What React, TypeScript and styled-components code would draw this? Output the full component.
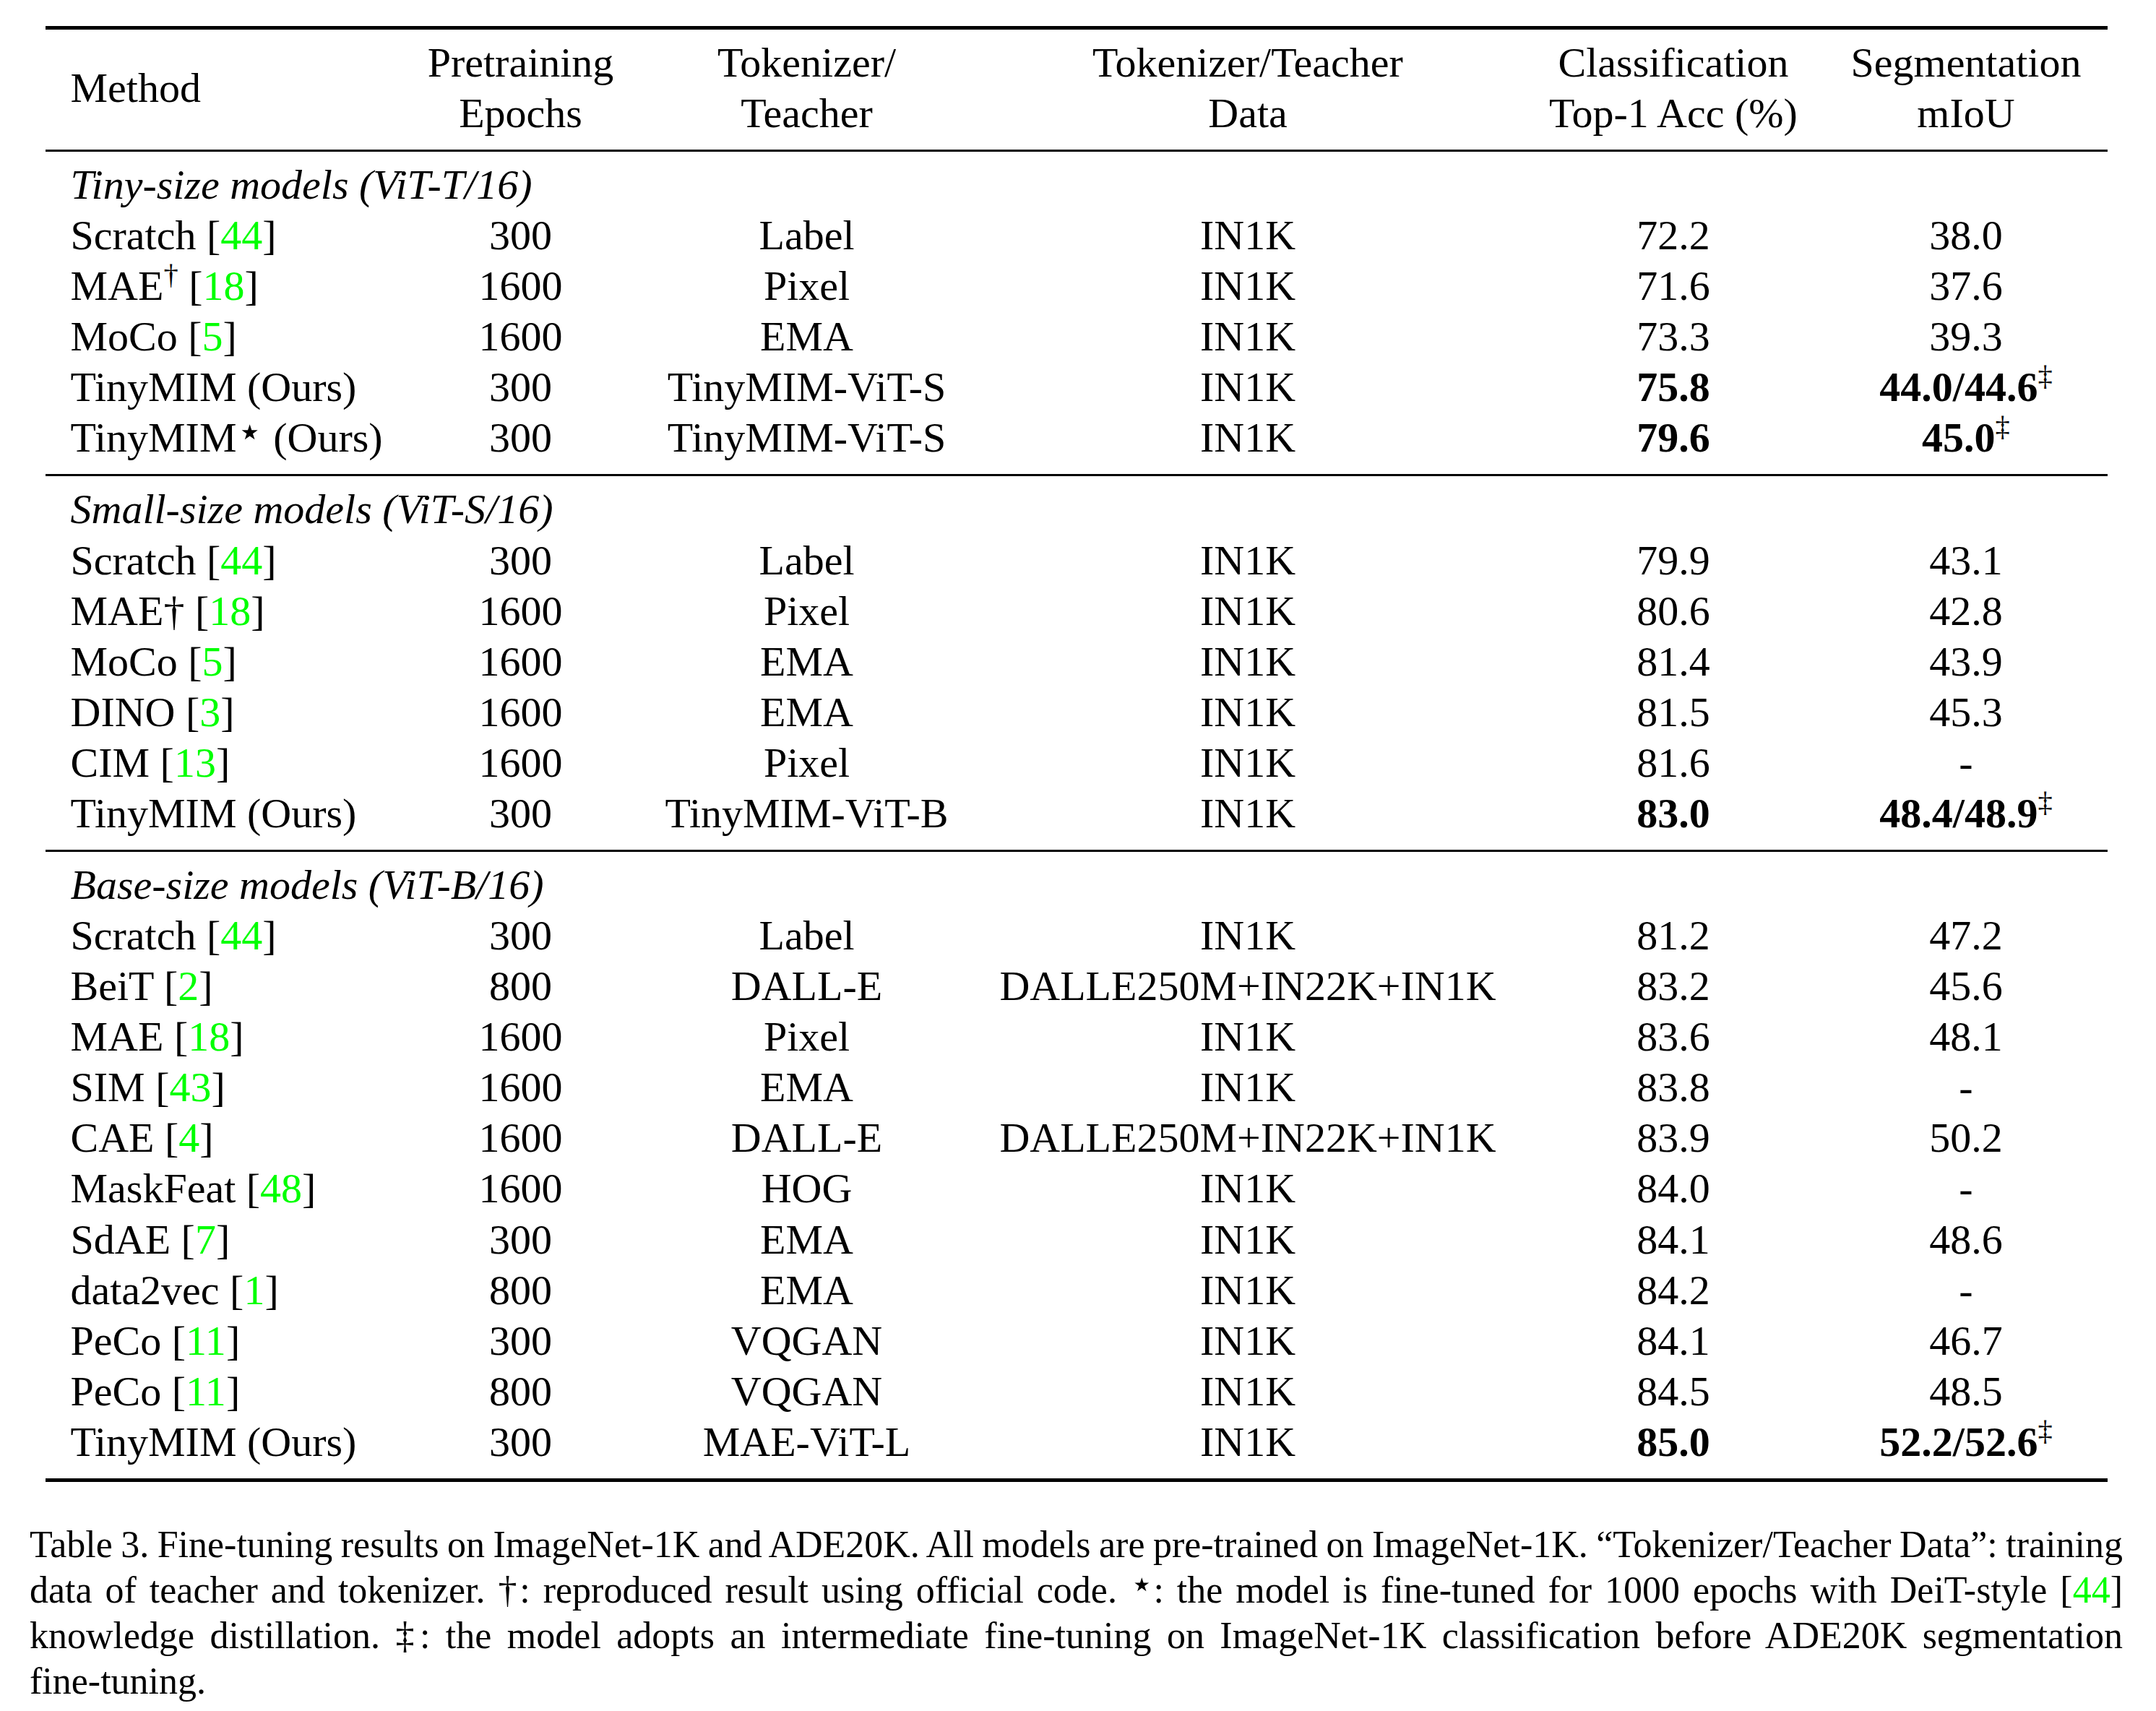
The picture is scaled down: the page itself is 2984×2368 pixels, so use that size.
import React from "react"
import styled, { createGlobalStyle } from "styled-components"

type Mark = "dagger" | "supDagger" | "supStar"

type Entry = {
  name: string
  mark?: Mark
  cite?: number
  epochs: number
  teacher: string
  data: string
  cls: string
  seg: string
  best?: boolean
  segNote?: boolean
}

type Group = {
  title: string
  rows: Entry[]
}

const IN1K = "IN1K"
const DALLE = "DALLE250M+IN22K+IN1K"

const groups: Group[] = [
  {
    title: "Tiny-size models (ViT-T/16)",
    rows: [
      { name: "Scratch", cite: 44, epochs: 300, teacher: "Label", data: IN1K, cls: "72.2", seg: "38.0" },
      { name: "MAE", mark: "supDagger", cite: 18, epochs: 1600, teacher: "Pixel", data: IN1K, cls: "71.6", seg: "37.6" },
      { name: "MoCo", cite: 5, epochs: 1600, teacher: "EMA", data: IN1K, cls: "73.3", seg: "39.3" },
      { name: "TinyMIM", epochs: 300, teacher: "TinyMIM-ViT-S", data: IN1K, cls: "75.8", seg: "44.0/44.6", best: true, segNote: true },
      { name: "TinyMIM", mark: "supStar", epochs: 300, teacher: "TinyMIM-ViT-S", data: IN1K, cls: "79.6", seg: "45.0", best: true, segNote: true },
    ],
  },
  {
    title: "Small-size models (ViT-S/16)",
    rows: [
      { name: "Scratch", cite: 44, epochs: 300, teacher: "Label", data: IN1K, cls: "79.9", seg: "43.1" },
      { name: "MAE", mark: "dagger", cite: 18, epochs: 1600, teacher: "Pixel", data: IN1K, cls: "80.6", seg: "42.8" },
      { name: "MoCo", cite: 5, epochs: 1600, teacher: "EMA", data: IN1K, cls: "81.4", seg: "43.9" },
      { name: "DINO", cite: 3, epochs: 1600, teacher: "EMA", data: IN1K, cls: "81.5", seg: "45.3" },
      { name: "CIM", cite: 13, epochs: 1600, teacher: "Pixel", data: IN1K, cls: "81.6", seg: "-" },
      { name: "TinyMIM", epochs: 300, teacher: "TinyMIM-ViT-B", data: IN1K, cls: "83.0", seg: "48.4/48.9", best: true, segNote: true },
    ],
  },
  {
    title: "Base-size models (ViT-B/16)",
    rows: [
      { name: "Scratch", cite: 44, epochs: 300, teacher: "Label", data: IN1K, cls: "81.2", seg: "47.2" },
      { name: "BeiT", cite: 2, epochs: 800, teacher: "DALL-E", data: DALLE, cls: "83.2", seg: "45.6" },
      { name: "MAE", cite: 18, epochs: 1600, teacher: "Pixel", data: IN1K, cls: "83.6", seg: "48.1" },
      { name: "SIM", cite: 43, epochs: 1600, teacher: "EMA", data: IN1K, cls: "83.8", seg: "-" },
      { name: "CAE", cite: 4, epochs: 1600, teacher: "DALL-E", data: DALLE, cls: "83.9", seg: "50.2" },
      { name: "MaskFeat", cite: 48, epochs: 1600, teacher: "HOG", data: IN1K, cls: "84.0", seg: "-" },
      { name: "SdAE", cite: 7, epochs: 300, teacher: "EMA", data: IN1K, cls: "84.1", seg: "48.6" },
      { name: "data2vec", cite: 1, epochs: 800, teacher: "EMA", data: IN1K, cls: "84.2", seg: "-" },
      { name: "PeCo", cite: 11, epochs: 300, teacher: "VQGAN", data: IN1K, cls: "84.1", seg: "46.7" },
      { name: "PeCo", cite: 11, epochs: 800, teacher: "VQGAN", data: IN1K, cls: "84.5", seg: "48.5" },
      { name: "TinyMIM", epochs: 300, teacher: "MAE-ViT-L", data: IN1K, cls: "85.0", seg: "52.2/52.6", best: true, segNote: true },
    ],
  },
]

const GlobalStyle = createGlobalStyle`
  html, body {
    margin: 0;
    padding: 0;
    background: #fff;
  }
  body {
    font-family: "Liberation Serif", "Times New Roman", "DejaVu Serif", serif;
    color: #000;
  }
`

const COLUMNS = "493px 330px 462px 759px 419px 391px"

const Page = styled.div`
  width: 2897px;
  margin-left: 41px;
  padding-top: 36px;
  padding-bottom: 40px;
`

const Table = styled.div`
  width: 2854px;
  margin: 0 auto;
  border-top: 5px solid #000;
  border-bottom: 5px solid #000;
  font-size: 58px;
  line-height: 70px;
`

const Block = styled.div<{ $ruled?: boolean }>`
  padding: 11px 0 15px;
  border-top: ${(p) => (p.$ruled ? "3px solid #000" : "none")};
`

const Row = styled.div<{ $tall?: boolean }>`
  display: grid;
  grid-template-columns: ${COLUMNS};
  height: ${(p) => (p.$tall ? "140px" : "70.08px")};
`

const Cell = styled.div<{ $left?: boolean; $bold?: boolean; $middle?: boolean }>`
  text-align: ${(p) => (p.$left ? "left" : "center")};
  padding-left: ${(p) => (p.$left ? "35px" : "0")};
  font-weight: ${(p) => (p.$bold ? 700 : 400)};
  align-self: ${(p) => (p.$middle ? "center" : "start")};
  white-space: nowrap;
`

const GroupTitle = styled.div`
  grid-column: 1 / -1;
  padding-left: 35px;
  font-style: italic;
  white-space: nowrap;
`

const Sup = styled.span`
  font-size: 0.7em;
  font-weight: 400;
  position: relative;
  top: -0.55em;
  line-height: 0;
`

const StarSup = styled(Sup)`
  font-family: "DejaVu Sans", sans-serif;
  font-size: 1em;
  top: -0.15em;
`

const Dagger = styled.span`
  margin-right: -0.1em;
`

const Cite = styled.span`
  color: #00ff00;
`

const Caption = styled.div`
  margin-top: 55px;
  font-size: 52px;
  line-height: 63px;
`

const CaptionLine = styled.div<{ $last?: boolean }>`
  text-align: ${(p) => (p.$last ? "left" : "justify")};
  text-align-last: ${(p) => (p.$last ? "left" : "justify")};
  word-spacing: -0.08em;
`

const MethodName: React.FC<{ entry: Entry }> = ({ entry }) => (
  <>
    {entry.name}
    {entry.mark === "supDagger" && <Sup>†</Sup>}
    {entry.mark === "dagger" && "†"}
    {entry.mark === "supStar" && <StarSup>⋆</StarSup>}
    {entry.cite !== undefined ? (
      <>
        {" "}[<Cite>{entry.cite}</Cite>]
      </>
    ) : (
      " (Ours)"
    )}
  </>
)

const App: React.FC = () => (
  <Page>
    <GlobalStyle />
    <Table>
      <Block>
        <Row $tall>
          <Cell $left $middle>Method</Cell>
          <Cell>
            Pretraining
            <br />
            Epochs
          </Cell>
          <Cell>
            Tokenizer/
            <br />
            Teacher
          </Cell>
          <Cell>
            Tokenizer/Teacher
            <br />
            Data
          </Cell>
          <Cell>
            Classification
            <br />
            Top-1 Acc (%)
          </Cell>
          <Cell>
            Segmentation
            <br />
            mIoU
          </Cell>
        </Row>
      </Block>
      {groups.map((group) => (
        <Block $ruled key={group.title}>
          <Row>
            <GroupTitle>{group.title}</GroupTitle>
          </Row>
          {group.rows.map((entry, i) => (
            <Row key={i}>
              <Cell $left>
                <MethodName entry={entry} />
              </Cell>
              <Cell>{entry.epochs}</Cell>
              <Cell>{entry.teacher}</Cell>
              <Cell>{entry.data}</Cell>
              <Cell $bold={entry.best}>{entry.cls}</Cell>
              <Cell $bold={entry.best}>
                {entry.seg}
                {entry.segNote && <Sup>‡</Sup>}
              </Cell>
            </Row>
          ))}
        </Block>
      ))}
    </Table>
    <Caption>
      <CaptionLine>
        Table 3. Fine-tuning results on ImageNet-1K and ADE20K. All models are pre-trained on
        ImageNet-1K. “Tokenizer/Teacher Data”: training
      </CaptionLine>
      <CaptionLine>
        data of teacher and tokenizer. <Dagger>†</Dagger>: reproduced result using official code.{" "}
        <StarSup>⋆</StarSup>: the model is fine-tuned for 1000 epochs with DeiT-style [
        <Cite>44</Cite>]
      </CaptionLine>
      <CaptionLine>
        knowledge distillation. <Dagger>‡</Dagger>: the model adopts an intermediate fine-tuning on
        ImageNet-1K classification before ADE20K segmentation
      </CaptionLine>
      <CaptionLine $last>fine-tuning.</CaptionLine>
    </Caption>
  </Page>
)

export default App
